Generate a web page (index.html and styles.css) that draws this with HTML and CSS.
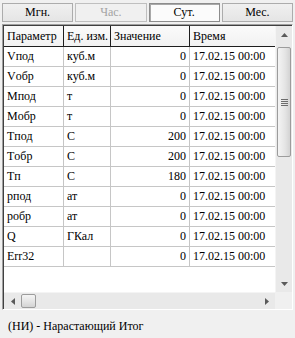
FILE: index.html
```html
<!DOCTYPE html>
<html lang="ru">
<head>
<meta charset="utf-8">
<link rel="stylesheet" href="styles.css">
</head>
<body>
<div class="tabs">
  <button class="tab">Мгн.</button>
  <button class="tab disabled">Час.</button>
  <button class="tab active">Сут.</button>
  <button class="tab">Мес.</button>
</div>
<div class="frame">
  <div class="inner">
    <div class="table">
      <div class="row head">
        <div class="c">Параметр</div><div class="c">Ед. изм.</div><div class="c">Значение</div><div class="c">Время</div>
      </div>
      <div class="row"><div class="c">Vпод</div><div class="c">куб.м</div><div class="c num">0</div><div class="c t">17.02.15 00:00</div></div>
      <div class="row"><div class="c">Vобр</div><div class="c">куб.м</div><div class="c num">0</div><div class="c t">17.02.15 00:00</div></div>
      <div class="row"><div class="c">Mпод</div><div class="c">т</div><div class="c num">0</div><div class="c t">17.02.15 00:00</div></div>
      <div class="row"><div class="c">Mобр</div><div class="c">т</div><div class="c num">0</div><div class="c t">17.02.15 00:00</div></div>
      <div class="row"><div class="c">Tпод</div><div class="c">C</div><div class="c num">200</div><div class="c t">17.02.15 00:00</div></div>
      <div class="row"><div class="c">Tобр</div><div class="c">C</div><div class="c num">200</div><div class="c t">17.02.15 00:00</div></div>
      <div class="row"><div class="c">Tп</div><div class="c">C</div><div class="c num">180</div><div class="c t">17.02.15 00:00</div></div>
      <div class="row"><div class="c">pпод</div><div class="c">ат</div><div class="c num">0</div><div class="c t">17.02.15 00:00</div></div>
      <div class="row"><div class="c">pобр</div><div class="c">ат</div><div class="c num">0</div><div class="c t">17.02.15 00:00</div></div>
      <div class="row"><div class="c">Q</div><div class="c">ГКал</div><div class="c num">0</div><div class="c t">17.02.15 00:00</div></div>
      <div class="row"><div class="c">Err32</div><div class="c"></div><div class="c num">0</div><div class="c t">17.02.15 00:00</div></div>
    </div>
    <div class="vscroll">
      <div class="arrow"><svg width="7" height="4" viewBox="0 0 7 4"><path d="M0 4 L3.5 0 L7 4 Z" fill="#5a5a5a"/></svg></div>
      <div class="vtrack">
        <div class="vthumb"><span class="grip"></span><span class="grip"></span><span class="grip"></span><span class="grip"></span></div>
      </div>
      <div class="arrow"><svg width="7" height="4" viewBox="0 0 7 4"><path d="M0 0 L7 0 L3.5 4 Z" fill="#5a5a5a"/></svg></div>
    </div>
    <div class="hscroll">
      <div class="harrow"><svg width="4" height="7" viewBox="0 0 4 7"><path d="M4 0 L4 7 L0 3.5 Z" fill="#5a5a5a"/></svg></div>
      <div class="hthumb"></div>
      <div class="htrack"></div>
      <div class="harrow"><svg width="4" height="7" viewBox="0 0 4 7"><path d="M0 0 L4 3.5 L0 7 Z" fill="#5a5a5a"/></svg></div>
    </div>
    <div class="corner"></div>
  </div>
</div>
<div class="status">(НИ) - Нарастающий Итог</div>
</body>
</html>
```

FILE: styles.css
```css
html, body {
  margin: 0;
  padding: 0;
}
body {
  background: #f0f0f0;
  font-family: "Liberation Serif", "Times New Roman", serif;
  font-size: 12px;
  color: #000;
  width: 295px;
  height: 338px;
  overflow: hidden;
}
.tabs {
  display: flex;
  gap: 2px;
  padding: 3px 2px 0 2px;
}
.tab {
  flex: 1;
  height: 19px;
  margin: 0;
  padding: 0;
  border: 1px solid #acacac;
  background: linear-gradient(#f0f0f0, #e5e5e5);
  font-family: "Liberation Serif", "Times New Roman", serif;
  font-size: 12px;
  color: #000;
  line-height: 17px;
}
.tab.disabled {
  color: #a3a3a3;
  background: #f0f0f0;
  border-color: #bfbfbf;
}
.tab.active {
  background: #fbfbfb;
  border-color: #8c8c8c;
  box-shadow: inset 1px 1px 0 #a8a8a8;
}
.frame {
  margin: 2px 0 0 2px;
  width: 291px;
  height: 286px;
  box-sizing: border-box;
  border: 1px solid;
  border-color: #a0a0a0 #ffffff #ffffff #a0a0a0;
}
.inner {
  height: 100%;
  box-sizing: border-box;
  border-top: 1px solid #404040;
  border-left: 1px solid #404040;
  display: grid;
  grid-template-columns: 271px 17px;
  grid-template-rows: 266px 17px;
  background: #fff;
}
.table {
  background: #fff;
}
.row {
  display: grid;
  grid-template-columns: 60px 47px 79px 85px;
  height: 20px;
}
.c {
  box-sizing: border-box;
  border-right: 1px solid #c6c6c6;
  border-bottom: 1px solid #c6c6c6;
  padding: 0 3px;
  line-height: 19px;
  white-space: nowrap;
  overflow: hidden;
}
.c.num {
  text-align: right;
}
.c.t {
  border-right: none;
  padding-left: 3px;
}
.row.head {
  height: 21px;
  background: linear-gradient(#fbfbfb, #f1f1f1);
}
.row.head .c {
  border-right: 1px solid #1e1e1e;
  border-bottom: 1px solid #1e1e1e;
  line-height: 20px;
}
.row.head .c:last-child {
  border-right: none;
}
.vscroll {
  display: flex;
  flex-direction: column;
  background: #e9e9e9;
  border-left: 1px solid #f4f4f4;
}
.arrow {
  height: 17px;
  display: flex;
  align-items: center;
  justify-content: center;
  flex: none;
}
.vtrack {
  flex: 1;
  padding: 4px 1px 0 1px;
}
.vthumb {
  height: 110px;
  box-sizing: border-box;
  border: 1px solid #9c9c9c;
  border-radius: 2px;
  background: linear-gradient(90deg, #f4f4f4, #e4e4e4 60%, #d3d3d3);
  display: flex;
  flex-direction: column;
  align-items: center;
  justify-content: center;
  gap: 1px;
}
.grip {
  width: 7px;
  height: 1px;
  background: #6c6c6c;
}
.hscroll {
  display: flex;
  align-items: stretch;
  background: #e9e9e9;
  border-top: 1px solid #f4f4f4;
}
.harrow {
  width: 17px;
  flex: none;
  display: flex;
  align-items: center;
  justify-content: center;
}
.hthumb {
  width: 15px;
  flex: none;
  margin: 1px 0;
  box-sizing: border-box;
  border: 1px solid #9c9c9c;
  border-radius: 2px;
  background: linear-gradient(#f4f4f4, #e2e2e2 60%, #d3d3d3);
}
.htrack {
  flex: 1;
}
.corner {
  background: #f0f0f0;
}
.status {
  padding: 9px 0 0 8px;
  line-height: 15px;
}
```
